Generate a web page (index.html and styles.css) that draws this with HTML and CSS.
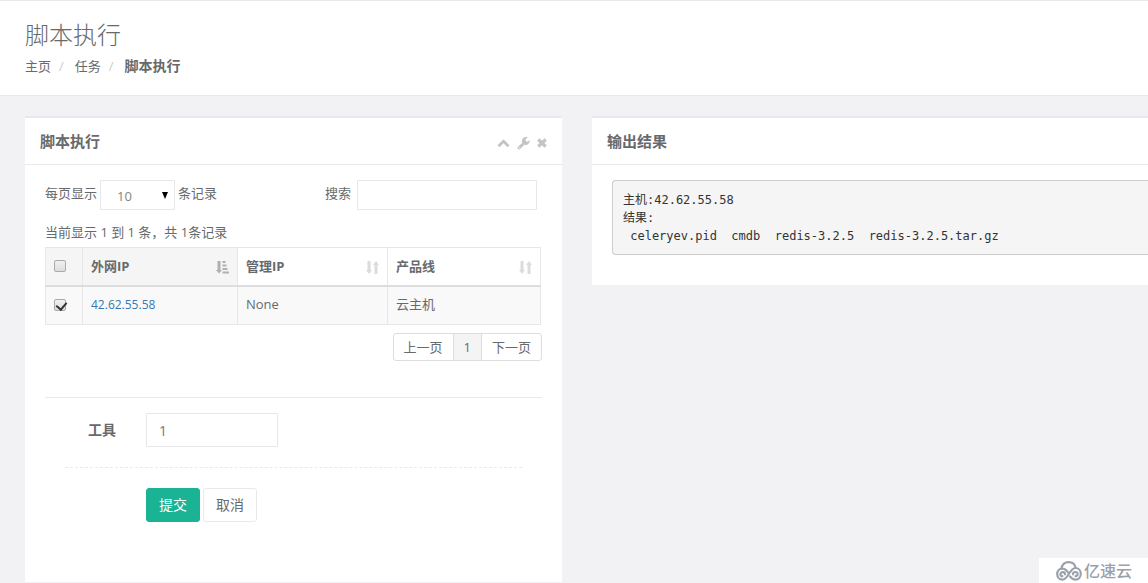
FILE: index.html
```html
<!DOCTYPE html>
<html lang="zh-CN">
<head>
<meta charset="utf-8">
<meta name="viewport" content="width=device-width, initial-scale=1">
<title>脚本执行</title>
<link rel="stylesheet" href="styles.css">
</head>
<body>
<header class="page-heading">
  <h1 class="page-title">脚本执行</h1>
  <nav aria-label="breadcrumb">
    <ol class="breadcrumb">
      <li><a href="#">主页</a></li>
      <li><a href="#">任务</a></li>
      <li class="current" aria-current="page">脚本执行</li>
    </ol>
  </nav>
</header>
<main class="content">
  <section class="panel panel-main">
    <header class="panel-head">
      <h2 class="panel-title">脚本执行</h2>
      <div class="panel-tools">
        <button type="button" class="tool" aria-label="收起"><svg width="13" height="12" viewBox="0 0 13 12"><path d="M1.500 9.200 6.500 4.300 11.500 9.200" fill="none" stroke="currentColor" stroke-width="2.800"/></svg></button>
        <button type="button" class="tool" aria-label="设置"><svg width="13" height="13" viewBox="0 0 13 13"><path d="M12.600 3.200a4 4 0 0 1-5.300 4.500L3 12a1.400 1.400 0 0 1-2.100-2L5.300 5.700A4 4 0 0 1 10.800.5L8.700 2v1.900l1.600.8z" fill="currentColor"/><circle cx="2.200" cy="10.800" r=".6" fill="#fff"/></svg></button>
        <button type="button" class="tool" aria-label="关闭"><svg width="10" height="12" viewBox="0 0 10 12"><path d="M1.300 2.500 8.700 9.500M8.700 2.500 1.300 9.500" fill="none" stroke="currentColor" stroke-width="3.200"/></svg></button>
      </div>
    </header>
    <div class="panel-body">
      <div class="filters">
        <label class="filter" for="page-size">每页显示
          <span class="select-wrap">
            <select id="page-size" class="control page-size"><option>10</option><option>25</option><option>50</option></select>
            <svg class="arrow" width="6" height="7" viewBox="0 0 6 7"><path d="M0 0h6L3 7z"/></svg>
          </span>
          条记录</label>
        <label class="filter" for="search">搜索 <input id="search" class="control search" type="text"></label>
      </div>
      <p class="info">当前显示 1 到 1 条，共 1条记录</p>
      <div class="table-wrap">
        <table class="hosts">
          <colgroup><col class="col-check"><col class="col-ip"><col class="col-manage"><col class="col-line"></colgroup>
          <thead>
            <tr>
              <th class="sorted"><input type="checkbox" class="check" aria-label="全选"></th>
              <th class="sorted"><div class="th-inner">外网IP<svg class="sort active" width="13" height="13" viewBox="0 0 13 13"><path d="M1.500 0h3v9H6L3 12.500 0 9h1.500zM6.500 0h3v2h-3zM6.500 3.500h4v2h-4zM6.500 7h5v2h-5zM6.500 10.500H13v2H6.500z"/></svg></div></th>
              <th><div class="th-inner">管理IP<svg class="sort" width="13" height="13" viewBox="0 0 13 13"><path d="M1.500 0h3v9H6l-3 4-3-4h1.500zM8.500 13h3V4H13l-3-4-3 4h1.500z"/></svg></div></th>
              <th><div class="th-inner">产品线<svg class="sort" width="13" height="13" viewBox="0 0 13 13"><path d="M1.500 0h3v9H6l-3 4-3-4h1.500zM8.500 13h3V4H13l-3-4-3 4h1.500z"/></svg></div></th>
            </tr>
          </thead>
          <tbody>
            <tr>
              <td><input type="checkbox" class="check" aria-label="选择 42.62.55.58" checked></td>
              <td><a class="host-link" href="#">42.62.55.58</a></td>
              <td>None</td>
              <td>云主机</td>
            </tr>
          </tbody>
        </table>
      </div>
      <nav class="pagination" aria-label="分页">
        <a href="#">上一页</a><a href="#" class="active" aria-current="page">1</a><a href="#">下一页</a>
      </nav>
      <form class="run-form">
        <div class="form-row">
          <label class="form-label" for="tool">工具</label>
          <input id="tool" class="control tool-input" type="text" value="1">
        </div>
        <hr class="dashed">
        <div class="actions">
          <button type="submit" class="btn btn-primary">提交</button>
          <button type="button" class="btn btn-white">取消</button>
        </div>
      </form>
    </div>
  </section>
  <section class="panel panel-output">
    <header class="panel-head"><h2 class="panel-title">输出结果</h2></header>
    <div class="panel-body output-body">
<pre class="output">主机:42.62.55.58
结果:
 celeryev.pid  cmdb  redis-3.2.5  redis-3.2.5.tar.gz</pre>
    </div>
  </section>
</main>
<div class="brand">
  <svg width="26" height="20" viewBox="0 0 26 20" fill="none" stroke="#9ba1aa" stroke-width="2.200" stroke-linecap="round"><path d="M5.500 8C5.500 3.500 9 1.200 12.500 1.200c3.500 0 6.300 2 7 5.300M12.800 12.500C10.500 9 8.500 7.500 6.200 7.500 3.200 7.500 1.200 10 1.200 13c0 3.300 2.300 5.600 5.300 5.600 6 0 7-11.600 13-11.600 3 0 5.300 2.500 5.300 5.800s-2.300 5.800-5.300 5.800c-2.500 0-4-1.300-5.500-3.300M9 13.300c0-1.300-1-2.100-2.300-2.100s-2.300 1-2.300 2.200 1 2 2 1.800M17 13.300c0-1.300 1-2.300 2.300-2.300s2.300 1 2.300 2.200-1 2.100-2.100 1.900"/></svg>
  <span>亿速云</span>
</div>
</body>
</html>
```
FILE: styles.css
```css
* { box-sizing: border-box; }
html, body { min-height: 100%; }
body {
  margin: 0;
  background: #f2f2f4;
  color: #676a6c;
  font-family: "Open Sans", "Noto Sans CJK SC", sans-serif;
  font-size: 13px;
  line-height: 18px;
  overflow-x: hidden;
}
input, select, button { font: inherit; color: inherit; }
a { color: inherit; text-decoration: none; }
svg { display: block; }

.page-heading {
  height: 96px;
  padding: 20px 25px 0;
  background: #fff;
  border-top: 1px solid #e7eaec;
  border-bottom: 1px solid #e7eaec;
}
.page-title { margin: 0 0 8px; font-size: 24px; line-height: 28px; font-weight: 300; }
.breadcrumb { display: flex; margin: 0; padding: 0; list-style: none; }
.breadcrumb li + li::before { content: "/"; padding: 0 11px 0 8px; color: #ccc; font-size: 13px; font-weight: 400; }
.breadcrumb .current { font-size: 14px; font-weight: 700; }

.content {
  display: grid;
  grid-template-columns: 537fr 556fr;
  gap: 30px;
  align-items: start;
  padding: 20px 0 0 25px;
}
.panel { background: #fff; border-top: 2px solid #e7eaec; }
.panel-head {
  display: flex;
  align-items: center;
  justify-content: space-between;
  height: 47px;
  padding: 0 15px;
  border-bottom: 1px solid #e7eaec;
}
.panel-title { margin: 0; font-size: 15px; line-height: 20px; font-weight: 700; }
.panel-tools { display: flex; align-items: center; gap: 7px; padding-top: 4px; }
.tool { display: block; padding: 0; border: 0; background: none; color: #c4c4c4; }
.panel-body { padding: 15px 20px 60px; }

.control { border: 1px solid #e5e6e7; border-radius: 1px; background: #fff; outline: 0; }
.filters { display: flex; justify-content: space-between; padding-right: 5px; }
.filter { display: flex; align-items: flex-start; gap: 3px; line-height: 26px; }
.filter .control { height: 30px; }
.select-wrap { display: flex; position: relative; }
.page-size { width: 75px; padding: 2px 16px 0; appearance: none; color: #858585; }
.arrow { position: absolute; right: 7px; top: 12px; fill: #000; pointer-events: none; }
.search { width: 180px; margin-left: 3px; padding: 4px 10px; }
.info { margin: 13px 0 6px; }

.table-wrap { padding-right: 1px; }
.hosts { width: 100%; border-collapse: collapse; table-layout: fixed; border: 1px solid #e7e7e7; }
.col-check { width: 37px; }
.col-ip { width: 155px; }
.col-manage { width: 150px; }
.hosts th, .hosts td { height: 38px; padding: 0 8px 1px; border: 1px solid #e7e7e7; text-align: left; }
.hosts th { border-bottom: 2px solid #ddd; font-size: 13px; }
.hosts td { height: 39px; padding-bottom: 2px; background: #f9f9f9; }
.hosts .sorted { background: #f5f5f6; }
.th-inner { display: flex; align-items: center; justify-content: space-between; }
.sort { margin-top: 4px; fill: #dcdcdc; }
.sort.active { fill: #b0b0b0; }
.host-link { color: #337ab7; font-size: 12px; }
.check {
  display: grid;
  width: 12px;
  height: 12px;
  margin: 1px 0 0;
  appearance: none;
  border: 1px solid #aaa;
  border-radius: 2px;
  background: linear-gradient(#f0f0f0, #ddd);
}
.check:checked::after {
  content: "";
  width: 5px;
  height: 8px;
  margin: 0 0 0 3px;
  border: solid #333;
  border-width: 0 2px 2px 0;
  transform: rotate(40deg);
}

.pagination { display: flex; justify-content: flex-end; margin: 8px 0 36px; }
.pagination a { height: 28px; padding: 4px 10px; border: 1px solid #ddd; line-height: 19px; }
.pagination a + a { margin-left: -1px; }
.pagination a:first-child { border-radius: 3px 0 0 3px; }
.pagination a:last-child { border-radius: 0 3px 3px 0; }
.pagination .active { background: #f4f4f4; }

.run-form { padding: 15px 20px 0; border-top: 1px solid #e7eaec; }
.form-row { display: flex; align-items: center; }
.form-label { width: 81px; padding-right: 30px; text-align: right; font-size: 14px; font-weight: 700; }
.tool-input { width: 132px; height: 34px; padding: 6px 12px; font-size: 14px; color: #777; }
.dashed { margin: 20px 0; border: 0; border-top: 1px dashed #e7eaec; }
.actions { display: flex; gap: 3px; padding-left: 81px; }
.btn { height: 34px; padding: 0 12px; border: 1px solid #e7eaec; border-radius: 3px; background: #fff; font-size: 14px; }
.btn-primary { border-color: #1ab394; background: #1ab394; color: #fff; }

.output-body { padding: 15px 0 30px 20px; }
.output {
  margin: 0;
  padding: 10px 10px 9px;
  border: 1px solid #ccc;
  border-right: 0;
  border-radius: 4px 0 0 4px;
  background: #f5f5f5;
  color: #333;
  font-family: "DejaVu Sans Mono", "Noto Sans CJK SC", monospace;
  font-size: 12px;
  line-height: 18px;
}
.brand {
  position: fixed;
  right: 0;
  bottom: 0;
  display: flex;
  align-items: center;
  gap: 2px;
  padding: 3px 16px 2px 17px;
  background: #fff;
  color: #9ba1aa;
  font-size: 16px;
  line-height: 20px;
  font-weight: 500;
}
```
